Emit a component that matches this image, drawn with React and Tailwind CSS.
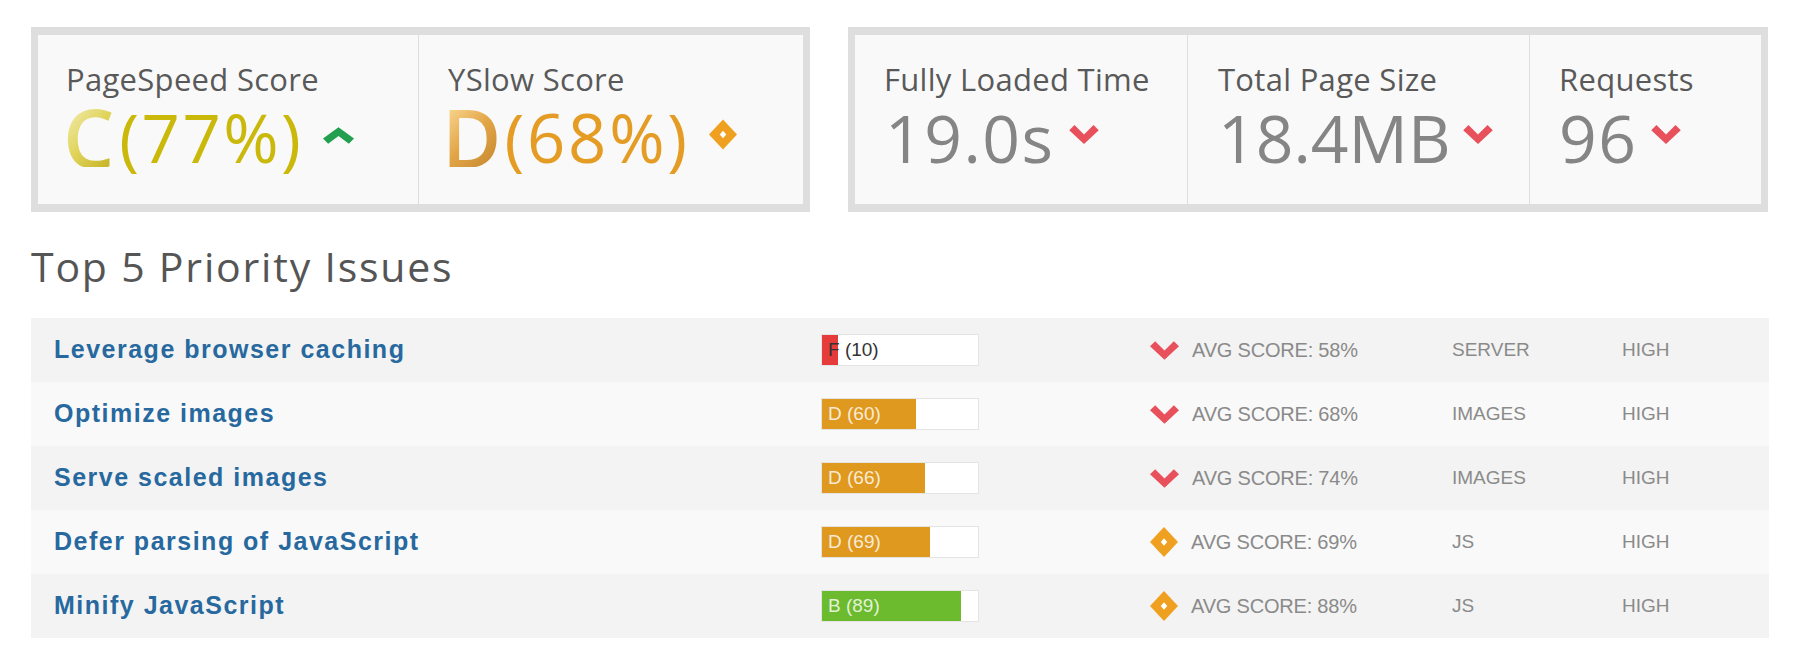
import React from "react";

const OPEN = { fontFamily: '"Open Sans", "Noto Sans", sans-serif' };
const LIB = { fontFamily: '"Liberation Sans", Arial, sans-serif' };

function ChevronDown({ w = 30, h = 19 }) {
  return (
    <svg width={w} height={h} viewBox="0 0 28 18" className="shrink-0">
      <polygon points="0,5 5,0 14,9 23,0 28,5 14,18" fill="#e8505b" />
    </svg>
  );
}

function ChevronUp() {
  return (
    <svg width="31" height="17" viewBox="0 0 30 16" className="shrink-0">
      <polygon points="0,11 15,0 30,11 25,16 15,8.5 5,16" fill="#23a04f" />
    </svg>
  );
}

function Diamond({ w = 28, h = 31 }) {
  return (
    <svg width={w} height={h} viewBox="0 0 26 28" className="shrink-0">
      <polygon points="13,0 26,14 13,28 0,14" fill="#f0a020" />
      <polygon points="13,10.5 16,14 13,17.5 10,14" fill="#ffffff" />
    </svg>
  );
}

function Cell({ label, children, className }) {
  return (
    <div className={className}>
      <div className="text-[31px] leading-[36px] tracking-[0.3px] text-[#595959]" style={OPEN}>
        {label}
      </div>
      <div className="flex h-[80px] items-center">{children}</div>
    </div>
  );
}

const rows = [
  { t: "Leverage browser caching", g: "F", s: 10, c: "#e63b3b", tc: "#333333", icon: "down", avg: 58, cat: "SERVER", bg: "bg-[#f3f3f3]" },
  { t: "Optimize images", g: "D", s: 60, c: "#e0991f", tc: "rgba(255,255,255,0.82)", icon: "down", avg: 68, cat: "IMAGES", bg: "bg-[#f9f9f9]" },
  { t: "Serve scaled images", g: "D", s: 66, c: "#e0991f", tc: "rgba(255,255,255,0.82)", icon: "down", avg: 74, cat: "IMAGES", bg: "bg-[#f3f3f3]" },
  { t: "Defer parsing of JavaScript", g: "D", s: 69, c: "#e0991f", tc: "rgba(255,255,255,0.82)", icon: "diamond", avg: 69, cat: "JS", bg: "bg-[#f9f9f9]" },
  { t: "Minify JavaScript", g: "B", s: 89, c: "#6cbb2e", tc: "rgba(255,255,255,0.82)", icon: "diamond", avg: 88, cat: "JS", bg: "bg-[#f3f3f3]" },
];

export default function App() {
  return (
    <div className="w-[1800px] h-[672px] bg-white pl-[31px] pt-[27px] overflow-hidden">
      {/* Top score boxes */}
      <div className="flex gap-[38px]">
        <div className="flex w-[779px] h-[185px] border-x-[7px] border-y-[8px] border-[#dedede] bg-[#f9f9f9]">
          <Cell label="PageSpeed Score" className="w-[381px] border-r border-[#dedede] pl-[28px] pt-[26px]">
            <span
              className="-ml-[3px] text-[81px] leading-[60px] font-semibold bg-linear-to-br from-[#f3eeb4] via-[#e0d45a] to-[#c4b21c] bg-clip-text text-transparent"
              style={OPEN}
            >
              C
            </span>
            <span className="ml-[5px] text-[67px] leading-[56px] tracking-[2.5px] text-[#cab80a]" style={OPEN}>
              (77%)
            </span>
            <span className="ml-[20px] -mt-[4px]">
              <ChevronUp />
            </span>
          </Cell>
          <Cell label="YSlow Score" className="flex-1 pl-[29px] pt-[26px]">
            <span
              className="-ml-[6px] text-[81px] leading-[60px] font-semibold bg-linear-to-br from-[#fbdc94] via-[#e2a546] to-[#c4862c] bg-clip-text text-transparent"
              style={OPEN}
            >
              D
            </span>
            <span className="ml-[3px] text-[67px] leading-[56px] tracking-[2.8px] text-[#e49c24]" style={OPEN}>
              (68%)
            </span>
            <span className="ml-[19px] -mt-[6px]">
              <Diamond w={28} h={31} />
            </span>
          </Cell>
        </div>

        <div className="flex w-[920px] h-[185px] border-x-[7px] border-y-[8px] border-[#dedede] bg-[#f9f9f9]">
          <Cell label="Fully Loaded Time" className="w-[333px] border-r border-[#dedede] pl-[29px] pt-[26px]">
            <span className="ml-[1px] text-[66px] leading-[56px] tracking-[1.5px] text-[#858585]" style={OPEN}>
              19.0s
            </span>
            <span className="ml-[14px] -mt-[6px]">
              <ChevronDown />
            </span>
          </Cell>
          <Cell label="Total Page Size" className="w-[342px] border-r border-[#dedede] pl-[30px] pt-[26px]">
            <span className="text-[66px] leading-[56px] tracking-[0px] text-[#858585]" style={OPEN}>
              18.4MB
            </span>
            <span className="ml-[12px] -mt-[6px]">
              <ChevronDown />
            </span>
          </Cell>
          <Cell label="Requests" className="flex-1 pl-[29px] pt-[26px]">
            <span className="text-[66px] leading-[56px] tracking-[1.5px] text-[#858585]" style={OPEN}>
              96
            </span>
            <span className="ml-[14px] -mt-[6px]">
              <ChevronDown />
            </span>
          </Cell>
        </div>
      </div>

      {/* Heading */}
      <h2 className="mt-[30px] text-[41px] leading-[48px] tracking-[1.8px] text-[#555555]" style={OPEN}>
        Top 5 Priority Issues
      </h2>

      {/* Table */}
      <div className="mt-[28px] w-[1738px]">
        {rows.map((r) => (
          <div
            key={r.t}
            className={`grid grid-cols-[790px_329px_302px_170px_1fr] h-[64px] items-center ${r.bg}`}
            style={LIB}
          >
            <div className="pl-[23px] text-[25px] font-bold tracking-[1.5px] text-[#27699f]">{r.t}</div>
            <div>
              <div className="relative w-[158px] h-[32px] bg-white border border-[#e4e4e4]">
                <div className="h-full" style={{ width: `${r.s}%`, backgroundColor: r.c }} />
                <div
                  className="absolute inset-0 flex items-center pl-[6px] text-[19px] whitespace-nowrap"
                  style={{ color: r.tc }}
                >
                  {r.g} ({r.s})
                </div>
              </div>
            </div>
            <div className="flex items-center gap-[13px] text-[20px] tracking-[-0.2px] text-[#8a8a8a]">
              {r.icon === "down" ? <ChevronDown w={29} h={19} /> : <Diamond w={28} h={32} />}
              <span>AVG SCORE: {r.avg}%</span>
            </div>
            <div className="text-[19px] text-[#8a8a8a]">{r.cat}</div>
            <div className="text-[19px] text-[#8a8a8a]">HIGH</div>
          </div>
        ))}
      </div>
    </div>
  );
}
